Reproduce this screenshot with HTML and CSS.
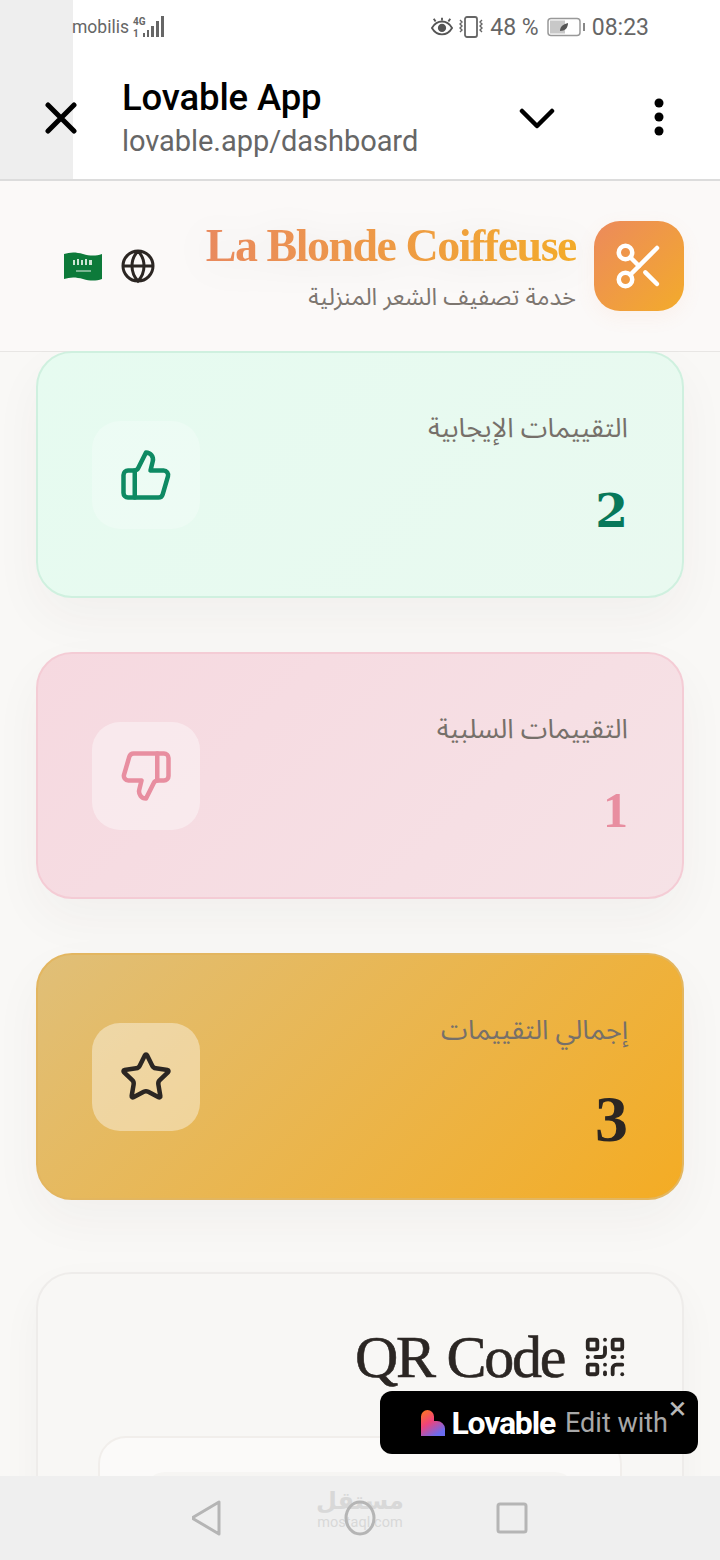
FILE: index.html
```html
<!DOCTYPE html>
<html lang="ar">
<head>
<meta charset="utf-8">
<title>Lovable App</title>
<link rel="stylesheet" href="styles.css">
</head>
<body>
<div class="phone">
  <div class="chrome">
    <div class="tab-edge"></div>
    <div class="chrome-main">
      <div class="status">
        <div class="status-left">
          <span>mobilis</span>
          <svg class="signal" viewBox="0 0 36 24" width="36" height="24"><text x="1" y="10" class="sig-text">4G</text><text x="1" y="22" class="sig-text">1</text><rect x="11" y="18" width="2" height="4"/><rect x="15" y="15" width="2" height="7"/><rect x="19" y="11" width="3" height="11"/><rect x="24" y="6" width="3" height="16"/><rect x="29" y="1" width="3" height="21"/></svg>
        </div>
        <div class="status-right">
          <svg viewBox="0 0 24 20" width="22" height="20" class="st-eye"><path d="M1 11c3-5 7-7 11-7s8 2 11 7c-3 5-7 7-11 7s-8-2-11-7z" fill="none" stroke="#555" stroke-width="2"/><circle cx="12" cy="11" r="4.5" fill="#555"/><path d="M5 4 3 1M12 3V0M19 4l2-3" stroke="#555" stroke-width="2"/></svg>
          <svg viewBox="0 0 28 24" width="28" height="24" class="st-vib"><rect x="8" y="2" width="12" height="20" rx="2" fill="none" stroke="#666" stroke-width="1.8"/><path d="M3 5l2 2-2 2 2 2-2 2 2 2-2 2M25 5l-2 2 2 2-2 2 2 2-2 2 2 2" fill="none" stroke="#666" stroke-width="1.4"/></svg>
          <span class="st-pct">48 %</span>
          <svg viewBox="0 0 40 20" width="40" height="20" class="st-bat"><rect x="1" y="1.500" width="32" height="17" rx="3" fill="#fff" stroke="#999" stroke-width="1.500"/><rect x="3" y="3.500" width="15" height="13" fill="#c8c8c8"/><path d="M13 14c0-5 4-7 8-8 0 5-3 8-8 8z" fill="#555"/><rect x="36" y="6" width="2" height="8" fill="#888"/></svg>
          <span>08:23</span>
        </div>
      </div>
      <div class="bar">
        <svg class="bar-x" viewBox="0 0 32 32" width="32" height="32"><path d="M3 3l26 26M29 3 3 29"/></svg>
        <div class="bar-title">
          <div class="bar-name">Lovable App</div>
          <div class="bar-url">lovable.app/dashboard</div>
        </div>
        <svg class="bar-chev" viewBox="0 0 36 22" width="36" height="22"><path d="M3 3l15 15L33 3"/></svg>
        <svg class="bar-dots" viewBox="0 0 12 38" width="12" height="38"><circle cx="6" cy="5" r="4.500"/><circle cx="6" cy="19" r="4.500"/><circle cx="6" cy="33" r="4.500"/></svg>
      </div>
    </div>
  </div>

  <header class="app-header">
    <div class="logo">
      <svg viewBox="0 0 24 24" width="54" height="54"><circle cx="6" cy="6" r="3"/><path d="M8.120 8.120 12 12"/><path d="M20 4 8.120 15.880"/><circle cx="6" cy="18" r="3"/><path d="M14.800 14.800 20 20"/></svg>
    </div>
    <div class="brand">
      <div class="brand-name" dir="ltr">La Blonde Coiffeuse</div>
      <div class="brand-sub">خدمة تصفيف الشعر المنزلية</div>
    </div>
    <div class="lang">
      <svg class="globe" viewBox="0 0 24 24" width="36" height="36"><circle cx="12" cy="12" r="10"/><path d="M12 2a14.500 14.500 0 0 0 0 20 14.500 14.500 0 0 0 0-20"/><path d="M2 12h20"/></svg>
      <svg class="flag" viewBox="0 0 38 30" width="38" height="30"><path d="M0 3c6-2 12-2 19 0s13 2 19 0v25c-6 2-12 2-19 0s-13-2-19 0z" fill="#0d7a3a"/><path d="M9 9h2v5H9zM13 8h2v6h-2zM17 9h2v5h-2zM21 8h2v6h-2zM25 9h3v5h-3z" fill="#cfe5d4"/><path d="M12 20h15" stroke="#e6f2e8" stroke-width="1"/></svg>
    </div>
  </header>

  <main class="content">
    <section class="card card-green">
      <div class="card-text">
        <div class="card-label">التقييمات الإيجابية</div>
        <div class="card-value value-two">2</div>
      </div>
      <div class="card-icon">
        <svg viewBox="0 0 24 24" width="54" height="54"><path d="M7 10v12"/><path d="M15 5.880 14 10h5.830a2 2 0 0 1 1.920 2.560l-2.330 8A2 2 0 0 1 17.500 22H4a2 2 0 0 1-2-2v-8a2 2 0 0 1 2-2h2.760a2 2 0 0 0 1.790-1.110L12 2a3.130 3.130 0 0 1 3 3.880Z"/></svg>
      </div>
    </section>
    <section class="card card-pink">
      <div class="card-text">
        <div class="card-label">التقييمات السلبية</div>
        <div class="card-value value-one">1</div>
      </div>
      <div class="card-icon">
        <svg viewBox="0 0 24 24" width="54" height="54"><path d="M17 14V2"/><path d="M9 18.120 10 14H4.170a2 2 0 0 1-1.920-2.560l2.330-8A2 2 0 0 1 6.500 2H20a2 2 0 0 1 2 2v8a2 2 0 0 1-2 2h-2.760a2 2 0 0 0-1.790 1.110L12 22a3.130 3.130 0 0 1-3-3.880Z"/></svg>
      </div>
    </section>
    <section class="card card-gold">
      <div class="card-text">
        <div class="card-label">إجمالي التقييمات</div>
        <div class="card-value value-three">3</div>
      </div>
      <div class="card-icon">
        <svg viewBox="0 0 24 24" width="54" height="54"><path d="M11.525 2.295a.53.53 0 0 1 .95 0l2.310 4.679a2.123 2.123 0 0 0 1.595 1.160l5.166.756a.53.53 0 0 1 .294.904l-3.736 3.638a2.123 2.123 0 0 0-.611 1.878l.882 5.140a.53.53 0 0 1-.771.560l-4.618-2.428a2.122 2.122 0 0 0-1.973 0L6.396 21.010a.53.53 0 0 1-.770-.560l.881-5.139a2.122 2.122 0 0 0-.611-1.879L2.160 9.795a.53.53 0 0 1 .294-.906l5.165-.755a2.122 2.122 0 0 0 1.597-1.160z"/></svg>
      </div>
    </section>
    <section class="qr-card">
      <h2 class="qr-title">
        <svg viewBox="0 0 24 24" width="46" height="46"><rect width="5" height="5" x="3" y="3" rx="1"/><rect width="5" height="5" x="16" y="3" rx="1"/><rect width="5" height="5" x="3" y="16" rx="1"/><path d="M21 16h-3a2 2 0 0 0-2 2v3"/><path d="M21 21v.010"/><path d="M12 7v3a2 2 0 0 1-2 2H7"/><path d="M3 12h.010"/><path d="M12 3h.010"/><path d="M12 16v.010"/><path d="M16 12h1"/><path d="M21 12v.010"/><path d="M12 21v-1"/></svg>
        <span dir="ltr">QR Code</span>
      </h2>
      <div class="qr-inner"><div class="qr-box"></div></div>
    </section>
  </main>

  <nav class="navbar">
    <svg viewBox="0 0 32 36" width="32" height="36"><path d="M27 2v32L0 18z"/></svg>
    <svg viewBox="0 0 32 36" width="32" height="36"><ellipse cx="16" cy="18" rx="14" ry="16"/></svg>
    <svg viewBox="0 0 32 32" width="32" height="32"><rect x="2" y="2" width="28" height="28" rx="2"/></svg>
    <div class="watermark"><span class="wm-ar">مستقل</span><span class="wm-en">mostaql.com</span></div>
  </nav>

  <div class="lovable-badge">
    <button class="badge-close">×</button>
    <span class="badge-edit">Edit with</span>
    <span class="badge-name">Lovable</span>
    <svg class="badge-heart" viewBox="0 0 24 26" width="24" height="26"><defs><linearGradient id="lh" x1="0" y1="0" x2="0.600" y2="1"><stop offset="0" stop-color="#ff7a1a"/><stop offset="0.500" stop-color="#f0437a"/><stop offset="1" stop-color="#6a6cf0"/></linearGradient></defs><path d="M0 6.500a6.500 6.500 0 0 1 13 0V11h3a8 8 0 0 1 8 7.500V26H0z" fill="url(#lh)"/></svg>
  </div>
</div>
</body>
</html>
```
FILE: styles.css
```css
* { box-sizing: border-box; }
html, body { margin: 0; padding: 0; }
body { width: 720px; height: 1560px; overflow: hidden; background: #fff; font-family: "Roboto", sans-serif; }
.phone { position: relative; width: 720px; height: 1560px; display: flex; flex-direction: column; overflow: hidden; background: #f9f8f6; }

.chrome { display: flex; height: 179px; flex: none; background: #fff; }
.tab-edge { width: 73px; background: #eeeeee; flex: none; }
.chrome-main { flex: 1; display: flex; flex-direction: column; }
.status { height: 54px; display: flex; justify-content: space-between; align-items: center; color: #666; font-size: 22px; padding-right: 71px; }
.status-left { display: flex; align-items: center; gap: 3px; font-size: 17.500px; margin-left: -1px; }
.signal { fill: #666; }
.sig-text { font-size: 10px; font-weight: 700; font-family: "Roboto", sans-serif; }
.status-right { display: flex; align-items: center; gap: 5px; font-size: 23px; }
.st-eye { margin-right: -1px; }
.st-pct { margin-right: 3px; }
.bar { flex: 1; position: relative; display: flex; align-items: center; padding-left: 49px; }
.bar-x { position: absolute; left: -28px; top: 48px; fill: none; stroke: #000; stroke-width: 5; stroke-linecap: round; }
.bar-title { display: flex; flex-direction: column; width: 397px; margin-top: 5px; }
.bar-name { font-size: 36.500px; line-height: 44px; color: #000; font-weight: 500; letter-spacing: -0.150px; }
.bar-url { font-size: 29px; line-height: 42px; color: #666; letter-spacing: -0.050px; }
.bar-chev { fill: none; stroke: #000; stroke-width: 4.500; stroke-linecap: round; stroke-linejoin: round; margin-top: 4px; }
.bar-dots { fill: #000; margin-left: 98px; }

.app-header { height: 173px; flex: none; display: flex; direction: rtl; align-items: center; padding: 0 36px; border-top: 2px solid #dcdcdc; border-bottom: 1px solid #e8e6e4; background: #fbf9f8; }
.logo { width: 90px; height: 90px; border-radius: 26px; background: linear-gradient(135deg, #ec8a5c, #f3ab2b); display: flex; align-items: center; justify-content: center; flex: none; box-shadow: 0 6px 20px rgba(236, 138, 92, 0.08); }
.logo svg { fill: none; stroke: #fff; stroke-width: 2; stroke-linecap: round; stroke-linejoin: round; }
.brand { margin-right: 18px; display: flex; flex-direction: column; align-items: flex-start; flex: 1; }
.brand-name { font-family: "Liberation Serif", serif; font-weight: 700; font-size: 46px; letter-spacing: -1.500px; line-height: 52px; margin-top: 1px; background: linear-gradient(90deg, #e98a5e, #f3ab2b); -webkit-background-clip: text; background-clip: text; color: transparent; filter: drop-shadow(0 4px 18px rgba(0, 0, 0, 0.07)); }
.brand-sub { font-family: "Noto Sans Arabic", "Noto Naskh Arabic", "DejaVu Sans", sans-serif; font-size: 23.700px; line-height: 34px; margin-top: 8px; color: #7d7670; }
.lang { display: flex; align-items: center; gap: 18px; margin-left: 28px; }
.globe { fill: none; stroke: #2b2623; stroke-width: 2; }
.flag { flex: none; }

.content { flex: 1; min-height: 0; padding: 0 36px; overflow: hidden; direction: rtl; display: flex; flex-direction: column; gap: 54px; margin-top: -1px; }
.card { flex: none; height: 247px; border-radius: 36px; padding: 0 54px; display: flex; align-items: center; justify-content: space-between; border: 2px solid; box-shadow: 0 20px 50px rgba(60, 50, 40, 0.045); }
.card-text { display: flex; flex-direction: column; gap: 18px; margin-top: -3px; }
.card-label { font-family: "Noto Sans Arabic", "Noto Naskh Arabic", "DejaVu Sans", sans-serif; font-size: 27px; line-height: 40px; color: #76706a; }
.card-value { font-family: "Liberation Serif", serif; font-weight: 700; font-size: 60px; line-height: 70px; height: 70px; }
.value-two { font-family: "DejaVu Serif", serif; font-size: 47px; padding-top: 9px; }
.value-one { font-size: 50px; padding-top: 7px; }
.value-three { font-size: 66px; padding-top: 15px; }
.card-icon { width: 108px; height: 108px; border-radius: 28px; display: flex; align-items: center; justify-content: center; background: rgba(255, 255, 255, 0.4); }
.card-icon svg { fill: none; stroke: currentColor; stroke-width: 2; stroke-linecap: round; stroke-linejoin: round; }
.card-green { background: linear-gradient(135deg, #e6fbf0, #e9f9f0); border-color: #cff0df; color: #0e8a63; }
.card-green .card-icon { background: rgba(255, 255, 255, 0.25); }
.card-green .card-value { color: #07785a; }
.card-pink { background: linear-gradient(135deg, #f6d9e0, #f6e2e6); border-color: #f4ccd5; color: #e88ea0; }
.card-gold { background: linear-gradient(135deg, #e0bf78, #f4ac24); border-color: #e3b660; color: #2b2623; }
.qr-card { flex: none; margin-top: 18px; height: 320px; border-radius: 36px; border: 2px solid #eeecea; background: #f8f7f5; padding: 48px 60px 0; box-shadow: 0 16px 40px rgba(60, 50, 40, 0.04); }
.qr-title { margin: 0 -6px 46px 0; display: flex; align-items: center; gap: 18px; font-family: "Liberation Serif", serif; font-weight: 400; font-size: 60px; letter-spacing: -2.300px; line-height: 70px; color: #2b2623; -webkit-text-stroke: 0.6px #2b2623; }
.qr-title svg { fill: none; stroke: currentColor; stroke-width: 2; stroke-linecap: round; stroke-linejoin: round; }
.qr-inner { height: 200px; border-radius: 28px; border: 2px solid #f1eeeb; background: #fbfaf9; padding-top: 34px; display: flex; justify-content: center; margin-top: -2px; }
.qr-box { width: 430px; height: 100px; background: #f6f5f3; border-radius: 20px; }

.navbar { position: relative; height: 84px; flex: none; background: #efefef; display: flex; justify-content: center; align-items: center; gap: 120px; }
.navbar svg { fill: none; stroke: #b5b5b5; stroke-width: 3; stroke-linejoin: round; position: relative; z-index: 1; }
.watermark { position: absolute; left: 316px; top: 11px; width: 88px; display: flex; flex-direction: column; align-items: center; color: #d8d8d8; line-height: 1; }
.wm-ar { font-family: "DejaVu Sans", sans-serif; font-weight: 700; font-size: 24px; line-height: 28px; }
.wm-en { font-size: 14.500px; line-height: 15px; }

.lovable-badge { position: absolute; left: 380px; top: 1391px; width: 318px; height: 63px; border-radius: 12px; background: #000; display: flex; flex-direction: row-reverse; align-items: center; padding-right: 30px; gap: 10px; }
.badge-close { position: absolute; right: 12px; top: 3px; background: none; border: 0; padding: 0; color: #b9b9b9; font-size: 32px; line-height: 28px; font-family: "Roboto", sans-serif; }
.badge-edit { color: #a8a8a8; font-size: 27px; line-height: 34px; }
.badge-name { color: #fff; font-size: 32px; font-weight: 700; letter-spacing: -1.200px; line-height: 34px; }
.badge-heart { flex: none; margin-right: -4px; }
```
